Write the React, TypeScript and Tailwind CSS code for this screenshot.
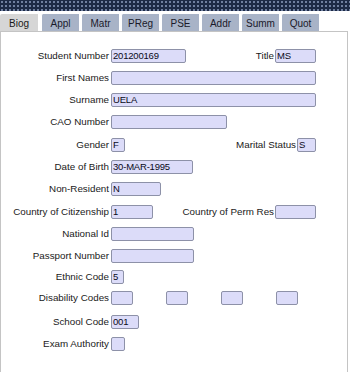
import React from "react";

const font = { fontFamily: '"Liberation Sans", Arial, sans-serif' };

function Box({ w, v }: { w: number; v?: string }) {
  return (
    <div
      className="h-[14px] shrink-0 rounded-[2px] border border-[#8d91a8] bg-[#dcdcf9] pl-[1px] text-[9.5px] leading-[12px] tracking-[-0.2px] text-[#0a0a1a] overflow-hidden whitespace-nowrap"
      style={{ width: w }}
    >
      {v}
    </div>
  );
}

function Row({
  label,
  w,
  v,
  mt,
  right,
}: {
  label: string;
  w: number;
  v?: string;
  mt: number;
  right?: React.ReactNode;
}) {
  return (
    <div className="flex h-[14px] w-[315px] items-center" style={{ marginTop: mt }}>
      <div className="w-[108px] shrink-0 whitespace-nowrap text-right text-[9.8px] text-[#1a1a1a]">{label}</div>
      <div className="ml-[2px] flex items-center">
        <Box w={w} v={v} />
      </div>
      {right && <div className="ml-auto flex items-center">{right}</div>}
    </div>
  );
}

function RightField({ label, w, v }: { label: string; w: number; v?: string }) {
  return (
    <>
      <span className="mr-[1px] whitespace-nowrap text-[9.8px] text-[#1a1a1a]">{label}</span>
      <Box w={w} v={v} />
    </>
  );
}

const tabs = ["Biog", "Appl", "Matr", "PReg", "PSE", "Addr", "Summ", "Quot"];

export default function App() {
  return (
    <div className="relative h-[372px] w-[350px] overflow-hidden bg-white" style={font}>
      <div className="h-[11px] bg-[#1d2a46] bg-[radial-gradient(circle,#7383a4_0.7px,transparent_0.9px)] bg-[length:4px_4px]" />
      <div className="h-[3px]" />
      <div className="flex h-[17px] items-stretch">
        {tabs.map((t, i) => (
          <div
            key={t}
            className={
              i === 0
                ? "flex w-[39px] items-center justify-center rounded-tl-[2px] border-r border-white bg-[#d6d6d6] pt-[2px] text-[10px] text-[#1a1a1a]"
                : "ml-[2px] flex w-[38px] items-center justify-center rounded-tl-[2px] border-l border-white bg-[#a8b3c7] pt-[2px] text-[10px] text-[#1a1a2a]"
            }
          >
            {t}
          </div>
        ))}
      </div>
      <div className="h-[341px] w-[348px] border-l border-r border-t border-[#c4c4c4]">
        <Row label="Student Number" w={75} v="201200169" mt={17} right={<RightField label="Title" w={41} v="MS" />} />
        <Row label="First Names" w={205} mt={8} />
        <Row label="Surname" w={205} v="UELA" mt={8} />
        <Row label="CAO Number" w={116} mt={8} />
        <Row label="Gender" w={14} v="F" mt={9} right={<RightField label="Marital Status" w={19} v="S" />} />
        <Row label="Date of Birth" w={82} v="30-MAR-1995" mt={8} />
        <Row label="Non-Resident" w={50} v="N" mt={8} />
        <Row label="Country of Citizenship" w={42} v="1" mt={9} right={<RightField label="Country of Perm Res" w={41} />} />
        <Row label="National Id" w={83} mt={8} />
        <Row label="Passport Number" w={83} mt={8} />
        <Row label="Ethnic Code" w={13} v="5" mt={7} />
        <div className="flex h-[14px] w-[315px] items-center" style={{ marginTop: 7 }}>
          <div className="w-[108px] shrink-0 whitespace-nowrap text-right text-[9.8px] text-[#1a1a1a]">Disability Codes</div>
          <div className="ml-[2px] flex items-center gap-[33px]">
            <Box w={22} />
            <Box w={22} />
            <Box w={22} />
            <Box w={22} />
          </div>
        </div>
        <Row label="School Code" w={28} v="001" mt={10} />
        <Row label="Exam Authority" w={14} mt={8} />
      </div>
    </div>
  );
}
